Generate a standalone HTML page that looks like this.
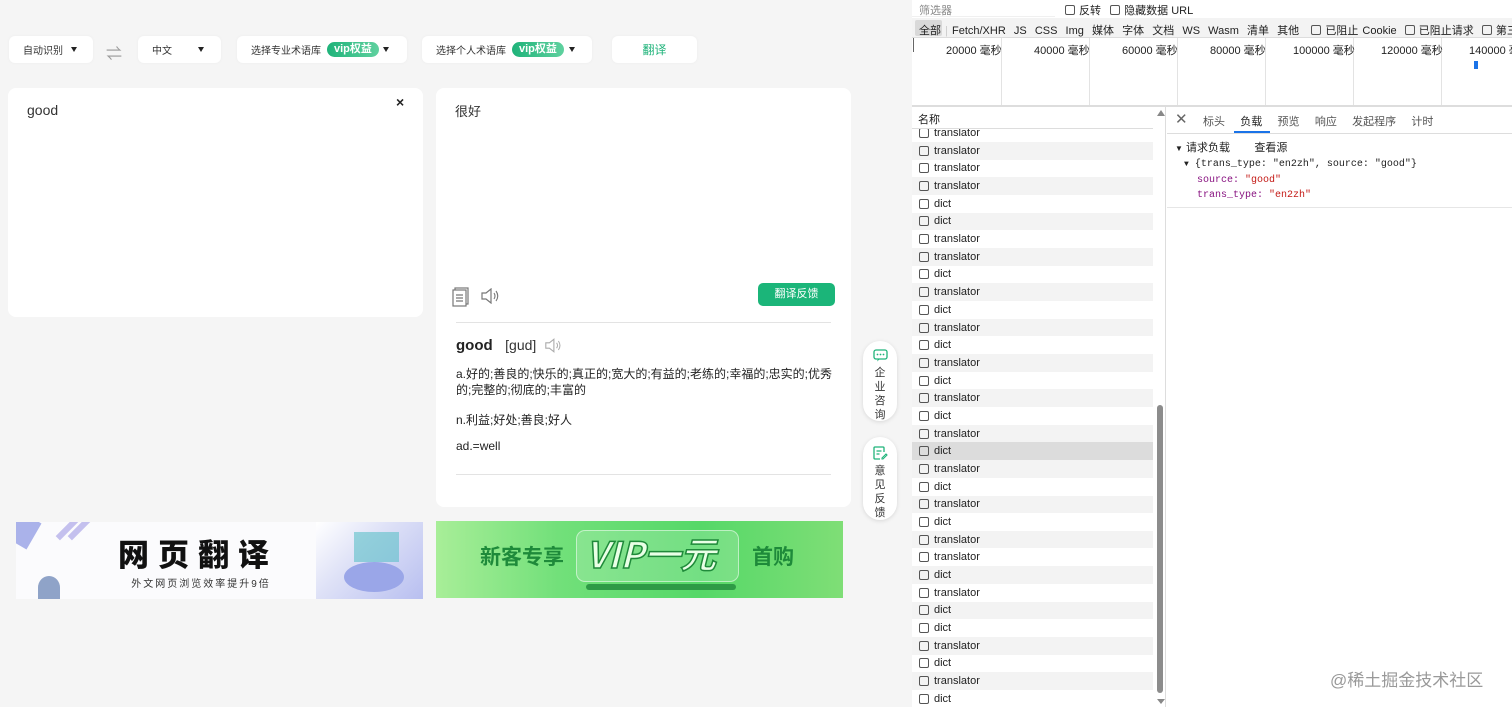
<!DOCTYPE html>
<html><head><meta charset="utf-8">
<style>
*{box-sizing:border-box;margin:0;padding:0}
body{width:1512px;height:707px;overflow:hidden;position:relative;background:#f5f5f5;font-family:"Liberation Sans","Noto Sans CJK SC",sans-serif;color:#333}
.a{position:absolute}
.sel{position:absolute;top:36px;height:27px;background:#fff;border-radius:6px;font-size:10px;color:#333;display:flex;align-items:center;padding-left:14px;box-shadow:0 0 3px rgba(0,0,0,.04)}
.tri{position:absolute;width:0;height:0;border-left:3.5px solid transparent;border-right:3.5px solid transparent;border-top:5px solid #222}
.vip{display:inline-block;background:linear-gradient(90deg,#1fb37a,#5fd19f);color:#fff;font-weight:bold;font-size:11px;border-radius:8px;padding:1px 7px;margin-left:6px;line-height:13px}
.card{position:absolute;background:#fff;border-radius:8px}
.dt{position:absolute;left:912px;top:0;width:600px;height:707px;background:#fff;font-size:11px;color:#222}
.row{position:absolute;left:0;width:241px;height:17.68px;display:flex;align-items:center;padding-left:7px;font-size:11px;color:#222}
.row i{display:inline-block;width:10px;height:10px;border:1px solid #555;border-radius:2px;margin-right:5px}
.row.s{background:#f3f3f3}
.row.h{background:#dcdcdc}
.cb{display:inline-block;width:10px;height:10px;border:1px solid #555;border-radius:2px;vertical-align:-1px;margin-right:4px}
.tl{position:absolute;top:42px;font-size:11px;color:#222}
.vl{position:absolute;top:38px;width:1px;height:67px;background:#e3e3e3}
.side{position:absolute;left:863px;width:34px;background:#fff;border-radius:17px;box-shadow:0 1px 4px rgba(0,0,0,.12);font-size:11px;color:#333;text-align:center;line-height:14px}
</style></head><body>

<div class="sel" style="left:9px;width:84px">自动识别<span class="tri" style="left:62px;top:11px"></span></div>
<div class="a" style="left:106px;top:40px;color:#999;font-size:16px">⇌</div>
<div class="sel" style="left:138px;width:83px">中文<span class="tri" style="left:60px;top:11px"></span></div>
<div class="sel" style="left:237px;width:170px">选择专业术语库<span class="vip">vip权益</span><span class="tri" style="left:146px;top:11px"></span></div>
<div class="sel" style="left:422px;width:170px">选择个人术语库<span class="vip">vip权益</span><span class="tri" style="left:147px;top:11px"></span></div>
<div class="sel" style="left:612px;width:85px;justify-content:center;padding:0;color:#1fb37a;font-size:12px">翻译</div>

<div class="card" style="left:8px;top:88px;width:415px;height:229px">
  <div class="a" style="left:19px;top:14px;font-size:14px;color:#333">good</div>
  <div class="a" style="left:388px;top:6px;font-size:14px;font-weight:bold;color:#222">×</div>
</div>

<div class="card" style="left:436px;top:88px;width:415px;height:419px">
  <div class="a" style="left:19px;top:13px;font-size:13px;color:#333">很好</div>
  <svg class="a" style="left:16px;top:199px" width="18" height="20" viewBox="0 0 18 20"><rect x="3" y="1" width="13" height="16" fill="none" stroke="#777" stroke-width="1.2"/><rect x="1" y="3" width="13" height="16" fill="#fff" stroke="#777" stroke-width="1.2"/><path d="M4 8h7M4 11h7M4 14h7" stroke="#777" stroke-width="1.2"/></svg>
  <svg class="a" style="left:44px;top:200px" width="20" height="16" viewBox="0 0 20 16"><path d="M2 5h4l5-4v14l-5-4H2z" fill="none" stroke="#777" stroke-width="1.2"/><path d="M14 5q2 3 0 6M16 3q3.5 5 0 10" fill="none" stroke="#777" stroke-width="1.1"/></svg>
  <div class="a" style="left:322px;top:195px;width:77px;height:23px;background:#1bb579;border-radius:5px;color:#fff;font-size:11px;text-align:center;line-height:23px">翻译反馈</div>
  <div class="a" style="left:20px;top:234px;width:375px;height:1px;background:#e3e3e3"></div>
  <div class="a" style="left:20px;top:249px;font-size:15px;color:#222"><b>good</b> &nbsp;&nbsp;<span style="font-size:14px;color:#333">[gud]</span></div>
  <svg class="a" style="left:108px;top:250px" width="18" height="15" viewBox="0 0 20 16"><path d="M2 5h4l5-4v14l-5-4H2z" fill="none" stroke="#aaa" stroke-width="1.2"/><path d="M14 5q2 3 0 6M16 3q3.5 5 0 10" fill="none" stroke="#aaa" stroke-width="1.1"/></svg>
  <div class="a" style="left:20px;top:278px;width:378px;font-size:12px;line-height:16px;color:#222">a.好的;善良的;快乐的;真正的;宽大的;有益的;老练的;幸福的;忠实的;优秀的;完整的;彻底的;丰富的</div>
  <div class="a" style="left:20px;top:323px;font-size:12px;color:#222">n.利益;好处;善良;好人</div>
  <div class="a" style="left:20px;top:351px;font-size:12px;color:#222">ad.=well</div>
  <div class="a" style="left:20px;top:386px;width:375px;height:1px;background:#e3e3e3"></div>
</div>

<div class="side" style="top:341px;height:80px;padding-top:8px">
  <svg width="15" height="13" viewBox="0 0 15 13"><rect x="1" y="1" width="13" height="9" rx="2" fill="none" stroke="#1fb37a" stroke-width="1.3"/><path d="M5 10l-1 2.5 3-2.5" fill="#1fb37a"/><circle cx="4.5" cy="5.5" r=".9" fill="#1fb37a"/><circle cx="7.5" cy="5.5" r=".9" fill="#1fb37a"/><circle cx="10.5" cy="5.5" r=".9" fill="#1fb37a"/></svg>
  <div>企<br>业<br>咨<br>询</div>
</div>
<div class="side" style="top:437px;height:83px;padding-top:9px">
  <svg width="15" height="14" viewBox="0 0 15 14"><path d="M11 6V2a1 1 0 0 0-1-1H2a1 1 0 0 0-1 1v10a1 1 0 0 0 1 1h5" fill="none" stroke="#1fb37a" stroke-width="1.3"/><path d="M3.5 5h5M3.5 8h3" stroke="#1fb37a" stroke-width="1.2"/><path d="M9 12l4-4 1 1-4 4H9z" fill="none" stroke="#1fb37a" stroke-width="1.1"/></svg>
  <div>意<br>见<br>反<br>馈</div>
</div>

<div class="a" style="left:16px;top:522px;width:407px;height:77px;background:#fbfbfd;overflow:hidden">
  <div class="a" style="left:-10px;top:-8px;width:30px;height:30px;background:#aab2ea;transform:rotate(30deg)"></div>
  <div class="a" style="left:48px;top:-6px;width:6px;height:26px;background:#c4c0ee;transform:rotate(45deg)"></div>
  <div class="a" style="left:60px;top:-6px;width:6px;height:26px;background:#c4c0ee;transform:rotate(45deg)"></div>
  <div class="a" style="left:22px;top:54px;width:22px;height:23px;background:#8fa3c8;border-radius:50% 50% 0 0"></div>
  <div class="a" style="left:300px;top:0;width:107px;height:77px;background:linear-gradient(135deg,#fff 0,#dfe2f7 40%,#b8bff0 100%)"></div>
  <div class="a" style="left:328px;top:40px;width:60px;height:30px;background:#9aa6e8;border-radius:50%"></div>
  <div class="a" style="left:338px;top:10px;width:45px;height:30px;background:#5bc0c8;opacity:.6"></div>
  <div class="a" style="left:92px;top:12px;width:180px;text-align:center;font-size:31px;font-weight:900;letter-spacing:9px;color:#111;font-family:'Noto Sans CJK SC',sans-serif;line-height:38px">网页翻译</div>
  <div class="a" style="left:100px;top:53px;width:170px;text-align:center;font-size:10px;letter-spacing:2px;color:#333">外文网页浏览效率提升9倍</div>
</div>

<div class="a" style="left:436px;top:521px;width:407px;height:77px;background:linear-gradient(90deg,#a8ee98 0%,#72e07a 30%,#55d868 65%,#7fde76 100%);overflow:hidden">
  <div class="a" style="left:140px;top:9px;width:163px;height:52px;border-radius:9px;background:rgba(255,255,255,.18);border:1px solid rgba(255,255,255,.5)"></div>
  <div class="a" style="left:44px;top:20px;font-size:21px;font-weight:bold;color:#1e8a3a;font-family:'Noto Sans CJK SC',sans-serif">新客专享</div>
  <div class="a" style="left:150px;top:10px;font-size:36px;font-style:italic;font-weight:bold;color:#e9ffe6;-webkit-text-stroke:1.5px #1f8a3a;font-family:'Noto Sans CJK SC',sans-serif;line-height:44px">VIP一元</div>
  <div class="a" style="left:316px;top:20px;font-size:21px;font-weight:bold;color:#1e8a3a;font-family:'Noto Sans CJK SC',sans-serif">首购</div>
  <div class="a" style="left:150px;top:63px;width:150px;height:6px;border-radius:3px;background:#2e9a46"></div>
</div>

<div class="dt">
  <div class="a" style="left:0;top:0;width:143px;height:17px;background:#fff;border-bottom:1px solid #f0f0f0"></div>
  <div class="a" style="left:7px;top:2px;color:#888;font-size:11px">筛选器</div>
  <div class="a" style="left:153px;top:2px"><span class="cb"></span>反转 &nbsp;&nbsp;<span class="cb"></span>隐藏数据 URL</div>
  <div class="a" style="left:0;top:18px;width:600px;height:20px;background:#f3f3f3;border-bottom:1px solid #ddd"></div>
  <div class="a" style="left:3px;top:20px;width:27px;height:16px;background:#d9d9d9;border-radius:2px"></div>
  <div class="a" style="left:7px;top:22px;white-space:nowrap;word-spacing:1px">全部 <span style="color:#ccc">|</span> Fetch/XHR &nbsp;JS &nbsp;CSS &nbsp;Img &nbsp;媒体 &nbsp;字体 &nbsp;文档 &nbsp;WS &nbsp;Wasm &nbsp;清单 &nbsp;其他 &nbsp;&nbsp;<span class="cb"></span>已阻止 Cookie &nbsp;<span class="cb"></span>已阻止请求 &nbsp;<span class="cb"></span>第三方请求</div>
  <div class="vl" style="left:1px;background:#666;height:14px"></div>
  <div class="vl" style="left:89px"></div><div class="vl" style="left:177px"></div><div class="vl" style="left:265px"></div><div class="vl" style="left:353px"></div><div class="vl" style="left:441px"></div><div class="vl" style="left:529px"></div>
  <div class="tl" style="left:34px">20000 毫秒</div>
  <div class="tl" style="left:122px">40000 毫秒</div>
  <div class="tl" style="left:210px">60000 毫秒</div>
  <div class="tl" style="left:298px">80000 毫秒</div>
  <div class="tl" style="left:381px">100000 毫秒</div>
  <div class="tl" style="left:469px">120000 毫秒</div>
  <div class="tl" style="left:557px;white-space:nowrap">140000 毫秒</div>
  <div class="a" style="left:562px;top:61px;width:4px;height:8px;background:#1a73e8"></div>
  <div class="a" style="left:0;top:105px;width:600px;height:2px;background:#ddd"></div>
  <div class="a" style="left:0;top:107px;width:254px;height:600px;border-right:1px solid #ddd;overflow:hidden">
    <div class="a" style="left:6px;top:4px;font-size:11px">名称</div>
    <div class="a" style="left:0;top:21px;width:241px;height:1px;background:#ddd"></div>
    <div class="a" style="left:245px;top:3px;width:0;height:0;border-left:4px solid transparent;border-right:4px solid transparent;border-bottom:6px solid #888"></div>
    <div class="a" style="left:0;top:22px;width:241px;height:578px;overflow:hidden">
      <div class="row" style="top:-4.8px"><i></i>translator</div>
      <div class="row s" style="top:12.9px"><i></i>translator</div>
      <div class="row" style="top:30.6px"><i></i>translator</div>
      <div class="row s" style="top:48.2px"><i></i>translator</div>
      <div class="row" style="top:65.9px"><i></i>dict</div>
      <div class="row s" style="top:83.6px"><i></i>dict</div>
      <div class="row" style="top:101.3px"><i></i>translator</div>
      <div class="row s" style="top:119px"><i></i>translator</div>
      <div class="row" style="top:136.6px"><i></i>dict</div>
      <div class="row s" style="top:154.3px"><i></i>translator</div>
      <div class="row" style="top:172px"><i></i>dict</div>
      <div class="row s" style="top:189.7px"><i></i>translator</div>
      <div class="row" style="top:207.4px"><i></i>dict</div>
      <div class="row s" style="top:225px"><i></i>translator</div>
      <div class="row" style="top:242.7px"><i></i>dict</div>
      <div class="row s" style="top:260.4px"><i></i>translator</div>
      <div class="row" style="top:278.1px"><i></i>dict</div>
      <div class="row s" style="top:295.8px"><i></i>translator</div>
      <div class="row h" style="top:313.4px"><i></i>dict</div>
      <div class="row s" style="top:331.1px"><i></i>translator</div>
      <div class="row" style="top:348.8px"><i></i>dict</div>
      <div class="row s" style="top:366.5px"><i></i>translator</div>
      <div class="row" style="top:384.2px"><i></i>dict</div>
      <div class="row s" style="top:401.8px"><i></i>translator</div>
      <div class="row" style="top:419.5px"><i></i>translator</div>
      <div class="row s" style="top:437.2px"><i></i>dict</div>
      <div class="row" style="top:454.9px"><i></i>translator</div>
      <div class="row s" style="top:472.6px"><i></i>dict</div>
      <div class="row" style="top:490.2px"><i></i>dict</div>
      <div class="row s" style="top:507.9px"><i></i>translator</div>
      <div class="row" style="top:525.6px"><i></i>dict</div>
      <div class="row s" style="top:543.3px"><i></i>translator</div>
      <div class="row" style="top:561px"><i></i>dict</div>
    </div>
    <div class="a" style="left:245px;top:298px;width:6px;height:288px;background:#8c8c8c;border-radius:3px"></div>
    <div class="a" style="left:245px;top:592px;width:0;height:0;border-left:4px solid transparent;border-right:4px solid transparent;border-top:5px solid #888"></div>
  </div>
  <div class="a" style="left:255px;top:107px;width:345px;height:27px;border-bottom:1px solid #ddd"></div>
  <div class="a" style="left:263px;top:110px;font-size:15px;color:#666">✕</div>
  <div class="a" style="left:291px;top:113px;color:#555;white-space:nowrap">标头 &nbsp;&nbsp;&nbsp;&nbsp;<span style="color:#222">负载</span> &nbsp;&nbsp;&nbsp;&nbsp;预览 &nbsp;&nbsp;&nbsp;&nbsp;响应 &nbsp;&nbsp;&nbsp;&nbsp;发起程序 &nbsp;&nbsp;&nbsp;&nbsp;计时</div>
  <div class="a" style="left:322px;top:131px;width:36px;height:2px;background:#1a73e8"></div>
  <div class="a" style="left:263px;top:139px;white-space:nowrap"><span style="font-size:8px">▼</span> 请求负载 &nbsp;&nbsp;&nbsp;&nbsp;&nbsp;&nbsp;&nbsp;查看源</div>
  <div class="a" style="left:272px;top:159px;font-family:'Liberation Mono',monospace;font-size:10px;white-space:nowrap"><span style="font-size:8px">▼</span> {trans_type: "en2zh", source: "good"}</div>
  <div class="a" style="left:285px;top:175px;font-family:'Liberation Mono',monospace;font-size:10px;color:#881280">source: <span style="color:#c41a16">"good"</span></div>
  <div class="a" style="left:285px;top:190px;font-family:'Liberation Mono',monospace;font-size:10px;color:#881280">trans_type: <span style="color:#c41a16">"en2zh"</span></div>
  <div class="a" style="left:255px;top:207px;width:345px;height:1px;background:#e6e6e6"></div>
  <div class="a" style="left:418px;top:666px;font-size:17px;color:#999">@稀土掘金技术社区</div>
</div>
</body></html>
